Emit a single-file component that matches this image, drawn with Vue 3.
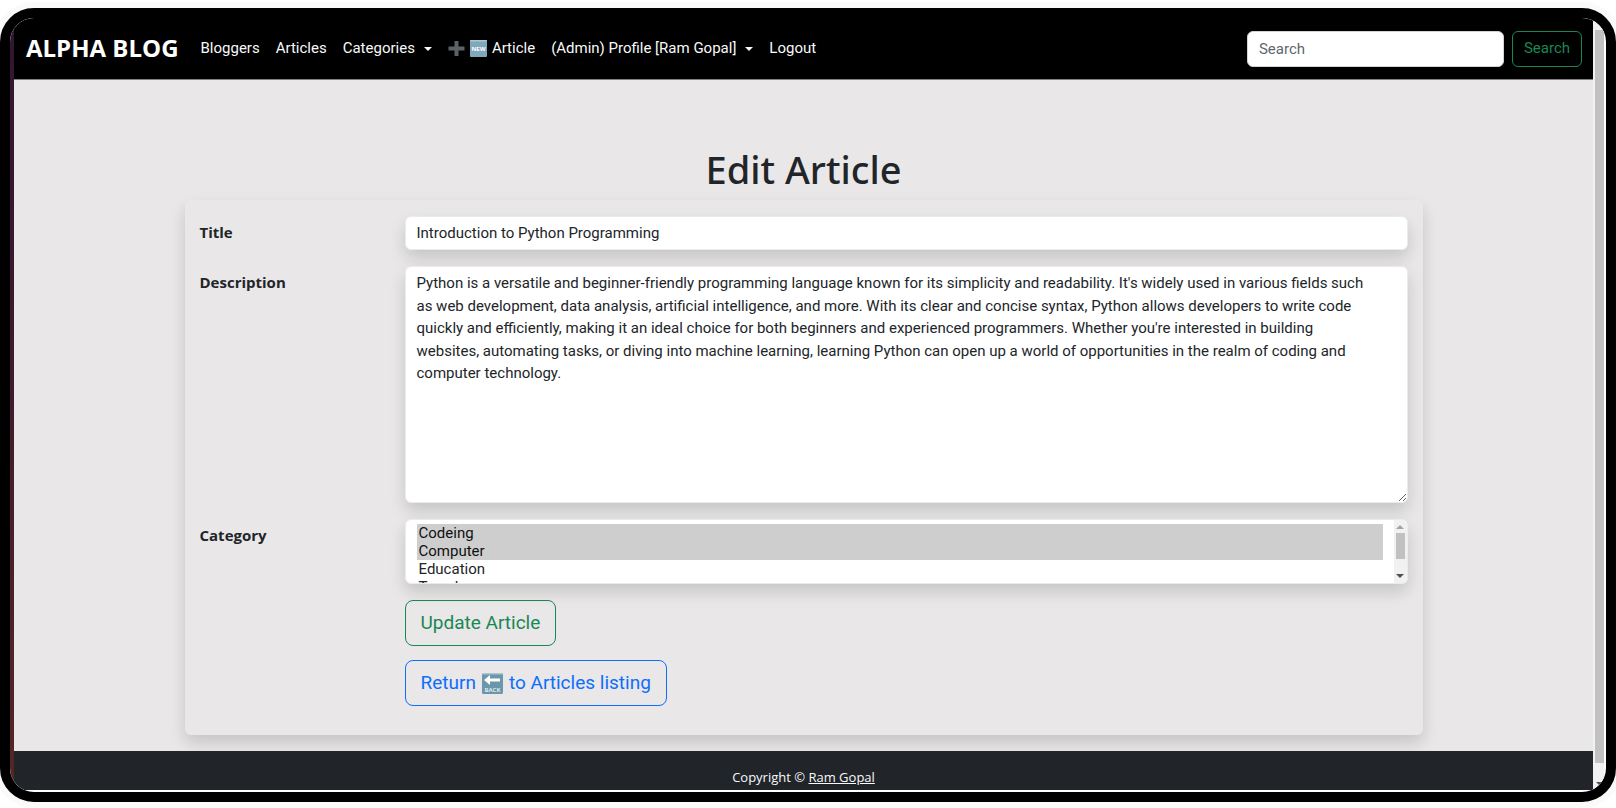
<script setup>
import { ref } from 'vue'

const query = ref('')
const title = ref('Introduction to Python Programming')
const description = ref(
  "Python is a versatile and beginner-friendly programming language known for its simplicity and readability. It's widely used in various fields such as web development, data analysis, artificial intelligence, and more. With its clear and concise syntax, Python allows developers to write code quickly and efficiently, making it an ideal choice for both beginners and experienced programmers. Whether you're interested in building websites, automating tasks, or diving into machine learning, learning Python can open up a world of opportunities in the realm of coding and computer technology."
)
const categories = ['Codeing', 'Computer', 'Education', 'Travel']
const selected = ref(['Codeing', 'Computer'])
</script>

<template>
  <div class="frame">
    <div class="edge"></div>
    <div class="page">
      <nav class="navbar">
        <a class="brand" href="#">ALPHA BLOG</a>
        <ul class="links">
          <li><a href="#">Bloggers</a></li>
          <li><a href="#">Articles</a></li>
          <li><a class="caret" href="#">Categories</a></li>
          <li>
            <a class="with-icon" href="#">
              <svg width="17" height="17" viewBox="0 0 17 17" aria-hidden="true">
                <path d="M6.5 1h4v5.500h6v4h-6V16h-4v-5.500h-6v-4h6z" fill="#5d6266" />
              </svg>
              <svg width="17" height="17" viewBox="0 0 17 17" aria-hidden="true">
                <rect width="17" height="17" rx="1" fill="#7fa8bd" />
                <rect width="17" height="1.500" rx=".7" fill="#a9c6d4" />
                <text x="8.500" y="11" text-anchor="middle" class="glyph-new">NEW</text>
              </svg>
              Article
            </a>
          </li>
          <li><a class="caret" href="#">(Admin) Profile [Ram Gopal]</a></li>
          <li><a href="#">Logout</a></li>
        </ul>
        <form class="search" @submit.prevent>
          <input v-model="query" type="search" placeholder="Search" aria-label="Search" />
          <button type="submit">Search</button>
        </form>
      </nav>

      <main>
        <h1>Edit Article</h1>
        <form class="card" @submit.prevent>
          <label for="title">Title</label>
          <input id="title" v-model="title" class="field" type="text" />
          <label for="description">Description</label>
          <textarea id="description" v-model="description" class="field"></textarea>
          <label for="category">Category</label>
          <div class="field listbox">
            <select id="category" v-model="selected" multiple>
              <option v-for="c in categories" :key="c" :value="c">{{ c }}</option>
            </select>
            <div class="list-scroll">
              <div class="arrow up"></div>
              <div class="list-thumb"></div>
              <div class="arrow"></div>
            </div>
          </div>
          <div class="actions">
            <button class="btn success" type="submit">Update Article</button>
            <a class="btn primary" href="#">
              Return
              <svg width="21" height="21" viewBox="0 0 21 21" aria-hidden="true">
                <rect width="21" height="21" rx="1.500" fill="#6c96a9" />
                <rect width="21" height="1.500" rx=".7" fill="#a9c6d4" />
                <path d="M2 7 8 2v3.500h10v3H8V12z" fill="#fff" />
                <text x="10.500" y="19" text-anchor="middle" class="glyph-back">BACK</text>
              </svg>
              to Articles listing
            </a>
          </div>
        </form>
      </main>

      <footer>
        <small>Copyright © <a href="#">Ram Gopal</a></small>
      </footer>
    </div>
    <div class="scrollbar">
      <div class="thumb"></div>
      <div class="arrow"></div>
    </div>
  </div>
</template>

<style>
body {
  background: #fff;
  overflow: hidden;
}
</style>

<style scoped>
* {
  box-sizing: border-box;
}
.frame {
  display: flex;
  min-height: calc(100vh - 14px);
  margin: 8px 0 6px;
  border: 10px solid #000;
  border-radius: 34px;
  background: #fff;
  padding: 0 2px 2px 0;
  overflow: hidden;
  box-shadow: 0 0 0 6px #fafafa;
  font-family: Roboto, "Noto Sans", sans-serif;
  font-size: 15px;
  line-height: 1.5;
  color: #212529;
}
input,
button,
textarea,
select {
  font: inherit;
  color: inherit;
}
.edge {
  width: 4px;
  background: linear-gradient(#2f1830, #3a1730 30%, #552726);
}
.page {
  flex: 1;
  min-width: 0;
  display: flex;
  flex-direction: column;
  background: #e9e7e8;
}
.navbar {
  display: flex;
  align-items: center;
  height: 62px;
  padding: 0 11px 0 12px;
  background: #000;
  border-bottom: 1px solid #808080;
}
.brand {
  margin-right: 22px;
  padding-bottom: 2px;
  font-family: "Open Sans", "Noto Sans", sans-serif;
  font-size: 24px;
  font-weight: 700;
  color: #fff;
  text-decoration: none;
}
.links {
  display: flex;
  gap: 16px;
  margin: 0;
  padding: 0;
  list-style: none;
}
.links a {
  display: flex;
  align-items: center;
  color: #f8f9fa;
  text-decoration: none;
  white-space: nowrap;
}
.with-icon {
  gap: 5px;
}
.caret::after {
  content: "";
  margin-left: 9px;
  border: 4px solid transparent;
  border-top-color: currentColor;
  border-bottom: 0;
}
.glyph-new {
  font: 700 6px "Noto Sans", sans-serif;
  fill: #fff;
}
.glyph-back {
  font: 700 6px "Noto Sans", sans-serif;
  fill: #dbe7ec;
}
.search {
  display: flex;
  gap: 8px;
  margin-left: auto;
}
.search input {
  width: 257px;
  height: 36px;
  padding: 0 11px;
  border: 1px solid #ced4da;
  border-radius: 6px;
  background: #fff;
  appearance: none;
}
.search input::placeholder {
  color: #5f666d;
}
.search button {
  height: 36px;
  padding: 0 11px;
  border: 1px solid #198754;
  border-radius: 6px;
  background: transparent;
  color: #198754;
}
main {
  flex: 1;
  width: 100%;
  max-width: 1238px;
  margin: 0 auto;
  padding: 67px 0 16px;
}
h1 {
  margin: 0 0 8px;
  font-family: "Noto Sans", sans-serif;
  font-size: 38px;
  line-height: 45px;
  font-weight: 500;
  text-align: center;
}
.card {
  display: grid;
  grid-template-columns: 190px 1fr;
  column-gap: 15px;
  row-gap: 16px;
  align-items: start;
  padding: 16px 15px 29px 15px;
  border-radius: 6px;
  background: #e9e7e8;
  box-shadow: 0 8px 16px rgba(0, 0, 0, 0.15);
}
label {
  padding-top: 5px;
  font-family: "Open Sans", "Noto Sans", sans-serif;
  font-weight: 700;
}
.field {
  display: block;
  width: 100%;
  margin: 0;
  padding: 5px 11px;
  border: 1px solid #e9ecef;
  border-radius: 6px;
  background: #fff;
  box-shadow: 0 8px 16px rgba(0, 0, 0, 0.15);
}
input.field {
  height: 34px;
}
textarea.field {
  height: 237px;
  padding-right: 36px;
  resize: vertical;
}
.listbox {
  display: flex;
  height: 65px;
  padding: 0;
  overflow: hidden;
}
.listbox select {
  flex: 1;
  min-width: 0;
  height: 63px;
  padding: 4px 11px 0;
  border: 0;
  outline: 0;
  background: transparent;
}
.list-scroll {
  display: flex;
  flex-direction: column;
  align-items: center;
  width: 13px;
  padding: 5px 0;
  background: #f1f1f1;
}
.list-thumb {
  width: 9px;
  height: 26px;
  margin: 4px 0 auto;
  background: #c1c1c1;
}
option {
  height: 18px;
  min-height: 18px;
  padding: 0 2px;
}
.actions {
  grid-column: 2;
  display: flex;
  flex-direction: column;
  align-items: flex-start;
  gap: 14px;
}
.btn {
  display: flex;
  align-items: center;
  gap: 6px;
  height: 46px;
  padding: 0 15px;
  border: 1px solid;
  border-radius: 8px;
  background: transparent;
  font-size: 19px;
  text-decoration: none;
}
.success {
  color: #198754;
}
.primary {
  color: #0d6efd;
}
footer {
  height: 39px;
  padding-top: 17px;
  background: #212529;
  color: #f8f9fa;
  font-size: 13px;
  text-align: center;
}
footer small {
  font-family: "Open Sans", "Noto Sans", sans-serif;
  font-size: inherit;
}
footer a {
  color: inherit;
}
.scrollbar {
  display: flex;
  flex-direction: column;
  width: 11px;
  padding: 12px 0 4px 2px;
  background: #f1f1f1;
}
.thumb {
  flex: 1;
  margin-bottom: 19px;
  background: #c1c1c1;
}
.arrow {
  align-self: center;
  border: 4px solid transparent;
  border-top-color: #505050;
  border-bottom: 0;
}
.arrow.up {
  border-bottom: 4px solid #a3a3a3;
  border-top: 0;
}
</style>
